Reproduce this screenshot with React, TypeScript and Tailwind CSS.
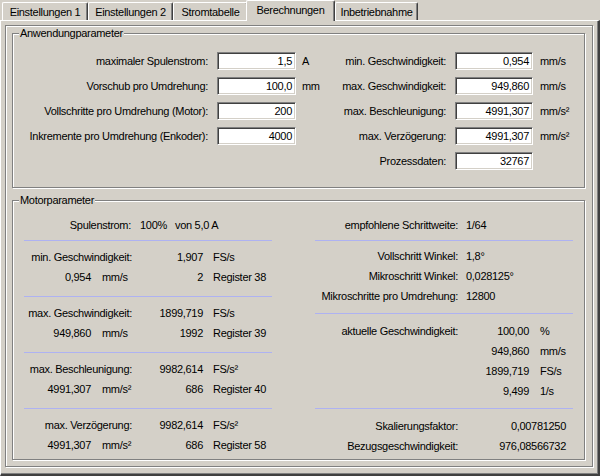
import React from 'react';

const tabs = [
  { label: 'Einstellungen 1', w: 'w-[86px]', active: false },
  { label: 'Einstellungen 2', w: 'w-[85px]', active: false },
  { label: 'Stromtabelle', w: 'w-[75px]', active: false },
  { label: 'Berechnungen', w: 'w-[89px]', active: true },
  { label: 'Inbetriebnahme', w: 'w-[83px]', active: false },
];

// sunken edit box, Win classic style
const Field = ({ value, w }: { value: string; w: string }) => (
  <div
    className={`flex h-[18px] ${w} items-center justify-end border border-t-[#808080] border-l-[#808080] border-b-white border-r-white bg-white pr-[3px] shadow-[inset_1px_1px_0_#404040,inset_-1px_-1px_0_#d4d0c8]`}
  >
    {value}
  </div>
);

const Sep = () => <div className="h-px bg-[#aeb2f2]" />;

const appRows = [
  { l: 'maximaler Spulenstrom:', v: '1,5', u: 'A', rl: 'min. Geschwindigkeit:', rv: '0,954', ru: 'mm/s' },
  { l: 'Vorschub pro Umdrehung:', v: '100,0', u: 'mm', rl: 'max. Geschwindigkeit:', rv: '949,860', ru: 'mm/s' },
  { l: 'Vollschritte pro Umdrehung (Motor):', v: '200', u: '', rl: 'max. Beschleunigung:', rv: '4991,307', ru: 'mm/s²' },
  { l: 'Inkremente pro Umdrehung (Enkoder):', v: '4000', u: '', rl: 'max. Verzögerung:', rv: '4991,307', ru: 'mm/s²' },
];

const motorBlocks = [
  { label: 'max. Geschwindigkeit:', fs: '1899,719', fsu: 'FS/s', mm: '949,860', mmu: 'mm/s', reg: '1992', regName: 'Register 39' },
  { label: 'max. Beschleunigung:', fs: '9982,614', fsu: 'FS/s²', mm: '4991,307', mmu: 'mm/s²', reg: '686', regName: 'Register 40' },
  { label: 'max. Verzögerung:', fs: '9982,614', fsu: 'FS/s²', mm: '4991,307', mmu: 'mm/s²', reg: '686', regName: 'Register 58' },
];

const MotorBlock = ({ b }: { b: (typeof motorBlocks)[number] }) => (
  <div className="flex flex-col pt-[6px] pb-[9px]">
    <div className="flex h-[20px] items-center">
      <span className="w-[108px] text-right">{b.label}</span>
      <span className="w-[71px] text-right">{b.fs}</span>
      <span className="pl-[10px]">{b.fsu}</span>
    </div>
    <div className="flex h-[20px] items-center">
      <span className="w-[67px] text-right">{b.mm}</span>
      <span className="w-[41px] pl-[11px]">{b.mmu}</span>
      <span className="w-[71px] text-right">{b.reg}</span>
      <span className="pl-[10px]">{b.regName}</span>
    </div>
  </div>
);

const App: React.FC = () => {
  return (
    <div className="h-[476px] w-[600px] overflow-hidden whitespace-nowrap bg-[#d4d0c8] font-[Liberation_Sans,Arial,sans-serif] text-[11px] leading-none tracking-[-0.3px] text-black">
      {/* Tabs */}
      <div className="flex h-[20px] items-end pl-[2px]">
        {tabs.map((t) =>
          t.active ? (
            <div
              key={t.label}
              className={`relative z-10 -mb-px -ml-[2px] flex h-[21px] ${t.w} items-center justify-center rounded-t-[2px] border-l border-r border-t border-l-white border-r-[#404040] border-t-white bg-[#d4d0c8] pb-[2px] shadow-[inset_-1px_0_0_#808080]`}
            >
              {t.label}
            </div>
          ) : (
            <div
              key={t.label}
              className={`flex h-[18px] ${t.w} items-center justify-center rounded-t-[2px] border-l border-r border-t border-l-white border-r-[#404040] border-t-white pt-[1px] shadow-[inset_-1px_0_0_#808080]`}
            >
              {t.label}
            </div>
          )
        )}
      </div>

      {/* Tab page */}
      <div className="h-[456px] border-b-2 border-l border-r-2 border-t border-b-[#404040] border-l-white border-r-[#404040] border-t-white pl-[4px] pt-[4px] shadow-[inset_-1px_-1px_0_#808080]">
        <div className="h-[442px] w-[588px] border border-[#808080] px-[6px] pt-[7px] shadow-[inset_1px_1px_0_#fff,1px_1px_0_#fff]">
          {/* Anwendungparameter */}
          <div className="relative h-[155px] w-[573px] border border-[#808080] pt-[18px] shadow-[inset_1px_1px_0_#fff,1px_1px_0_#fff]">
            <span className="absolute -top-[7px] left-[6px] bg-[#d4d0c8] px-px leading-[13px]">Anwendungparameter</span>
            <div className="flex flex-col gap-[7px]">
              {appRows.map((r) => (
                <div key={r.l} className="flex h-[18px] items-center">
                  <span className="w-[195px] text-right">{r.l}</span>
                  <div className="ml-[9px]">
                    <Field value={r.v} w="w-[79px]" />
                  </div>
                  <span className="w-[34px] pl-[6px]">{r.u}</span>
                  <span className="w-[116px] text-right">{r.rl}</span>
                  <div className="ml-[9px]">
                    <Field value={r.rv} w="w-[78px]" />
                  </div>
                  <span className="pl-[7px]">{r.ru}</span>
                </div>
              ))}
              <div className="flex h-[18px] items-center">
                <span className="ml-[317px] w-[116px] text-right">Prozessdaten:</span>
                <div className="ml-[9px]">
                  <Field value="32767" w="w-[78px]" />
                </div>
              </div>
            </div>
          </div>

          {/* Motorparameter */}
          <div className="relative mt-[12px] h-[260px] w-[573px] border border-[#808080] pl-[11px] pt-[14px] shadow-[inset_1px_1px_0_#fff,1px_1px_0_#fff]">
            <span className="absolute -top-[7px] left-[6px] bg-[#d4d0c8] px-px leading-[13px]">Motorparameter</span>
            <div className="flex gap-[43px]">
              {/* left column */}
              <div className="flex w-[248px] flex-col">
                <div className="flex h-[20px] items-center">
                  <span className="w-[107px] text-right">Spulenstrom:</span>
                  <span className="w-[44px] pl-[9px]">100%</span>
                  <span>von 5,0 A</span>
                </div>
                <div className="h-[5px]" />
                <Sep />
                <MotorBlock
                  b={{ label: 'min. Geschwindigkeit:', fs: '1,907', fsu: 'FS/s', mm: '0,954', mmu: 'mm/s', reg: '2', regName: 'Register 38' }}
                />
                {motorBlocks.map((b) => (
                  <React.Fragment key={b.label}>
                    <Sep />
                    <MotorBlock b={b} />
                  </React.Fragment>
                ))}
              </div>

              {/* right column */}
              <div className="flex w-[258px] flex-col">
                <div className="flex h-[20px] items-center">
                  <span className="w-[143px] text-right">empfohlene Schrittweite:</span>
                  <span className="pl-[8px]">1/64</span>
                </div>
                <div className="h-[5px]" />
                <Sep />
                <div className="flex flex-col pt-[5px] pb-[7px]">
                  {[
                    ['Vollschritt Winkel:', '1,8°'],
                    ['Mikroschritt Winkel:', '0,028125°'],
                    ['Mikroschritte pro Umdrehung:', '12800'],
                  ].map(([l, v]) => (
                    <div key={l} className="flex h-[20px] items-center">
                      <span className="w-[143px] text-right">{l}</span>
                      <span className="pl-[8px]">{v}</span>
                    </div>
                  ))}
                </div>
                <Sep />
                <div className="flex flex-col pt-[7px] pb-[7px]">
                  {[
                    ['aktuelle Geschwindigkeit:', '100,00', '%'],
                    ['', '949,860', 'mm/s'],
                    ['', '1899,719', 'FS/s'],
                    ['', '9,499', '1/s'],
                  ].map(([l, v, u]) => (
                    <div key={v} className="flex h-[20px] items-center">
                      <span className="w-[143px] text-right">{l}</span>
                      <span className="w-[71px] text-right">{v}</span>
                      <span className="pl-[11px]">{u}</span>
                    </div>
                  ))}
                </div>
                <Sep />
                <div className="flex flex-col pt-[7px]">
                  {[
                    ['Skalierungsfaktor:', '0,00781250'],
                    ['Bezugsgeschwindigkeit:', '976,08566732'],
                  ].map(([l, v]) => (
                    <div key={l} className="flex h-[20px] items-center">
                      <span className="w-[143px] text-right">{l}</span>
                      <span className="w-[108px] text-right">{v}</span>
                    </div>
                  ))}
                </div>
              </div>
            </div>
          </div>
        </div>
      </div>
    </div>
  );
};

export default App;
